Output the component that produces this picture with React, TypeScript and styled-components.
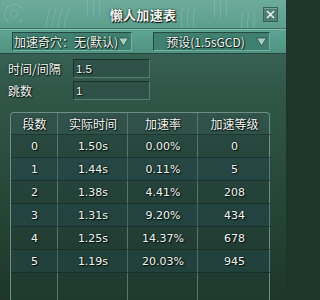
import React from "react";
import styled, { createGlobalStyle } from "styled-components";

const GlobalStyle = createGlobalStyle`
  html, body {
    margin: 0;
    padding: 0;
    background: #1d3629;
  }
  * { box-sizing: border-box; }
`;

const CJK = `"Noto Sans CJK SC", sans-serif`;
const NUM = `"DejaVu Sans", "Noto Sans CJK SC", sans-serif`;
const SHADOW = `0 0 2px #07140f, 1px 1px 1px #06110c`;

const Window = styled.div`
  width: 286px;
  height: 300px;
  display: flex;
  flex-direction: column;
  font-family: ${CJK};
  color: #f2f6f2;
  background: linear-gradient(180deg, #3f6e64 0%, #315749 30%, #254535 70%, #1d3629 100%);
  overflow: hidden;
`;

const ring = (x: number, y: number, r: number) =>
  `repeating-radial-gradient(circle at ${x}px ${y}px, transparent 0 3px, rgba(150, 210, 194, 0.28) 3px 4px, transparent 4px 6px) ${x - r}px ${y - r}px / ${r * 2}px ${r * 2}px no-repeat`;

const TitleBar = styled.div`
  height: 29px;
  display: grid;
  grid-template-columns: 1fr auto 1fr;
  align-items: center;
  padding: 0 8px;
  background:
    ${ring(12, 12, 10)},
    ${ring(58, 20, 12)},
    ${ring(92, 8, 9)},
    ${ring(188, 18, 11)},
    ${ring(222, 8, 10)},
    ${ring(250, 22, 9)},
    linear-gradient(180deg, #6dab9b 0%, #5f9f8e 100%);
  border-bottom: 1px solid #3f7466;
`;

const Title = styled.div`
  grid-column: 2;
  font-size: 13px;
  font-weight: bold;
  letter-spacing: 0.3px;
  text-shadow: ${SHADOW};
  padding-top: 1px;
`;

const CloseButton = styled.div`
  grid-column: 3;
  justify-self: end;
  width: 15px;
  height: 15px;
  display: flex;
  align-items: center;
  justify-content: center;
  background: #4f7f73;
  border: 1px solid #3a6358;
  box-shadow: inset 0 1px 0 rgba(255, 255, 255, 0.25);
`;

const SelectBar = styled.div`
  height: 25px;
  display: flex;
  align-items: center;
  gap: 21px;
  padding: 0 16px 0 12px;
  background: linear-gradient(180deg, #5ea493 0%, #4f9282 100%);
  border-top: 1px solid #7dbcab;
  border-bottom: 1px solid #27463d;
`;

const Select = styled.div<{ $center?: boolean }>`
  flex: 1;
  height: 19px;
  display: flex;
  align-items: center;
  padding: 0 2px 0 1px;
  background: #3f8070;
  border: 1px solid #244a40;
  border-right-color: #6fb0a0;
  border-bottom-color: #6fb0a0;
  font-size: 12px;
  text-shadow: ${SHADOW};
  white-space: nowrap;

  span {
    flex: 1;
    text-align: ${(p) => (p.$center ? "center" : "left")};
  }
`;

const Arrow = styled.svg`
  width: 11px;
  height: 10px;
  flex: none;
`;

const Form = styled.div`
  display: flex;
  flex-direction: column;
  gap: 3px;
  padding: 5px 0 0 8px;
`;

const FormRow = styled.div`
  display: flex;
  align-items: center;
`;

const Label = styled.div`
  width: 65px;
  font-size: 12px;
  text-shadow: ${SHADOW};
`;

const Input = styled.div`
  width: 77px;
  height: 19px;
  display: flex;
  align-items: center;
  padding: 0 2px;
  font-family: "Liberation Sans", sans-serif;
  font-size: 11.5px;
  background: #2e5148;
  border: 1px solid #1a3029;
  border-right-color: #557d72;
  border-bottom-color: #557d72;
  text-shadow: ${SHADOW};
`;

const Table = styled.div`
  margin: 12px 0 0 10px;
  width: 260px;
  flex: 1;
  display: grid;
  grid-template-columns: 47px 70px 70px 73px;
  grid-auto-rows: 23px;
  grid-template-rows: 22px;
  align-content: start;
  border: 1px solid #6d8f86;
  border-bottom: none;
  border-radius: 4px 4px 0 0;
  background:
    linear-gradient(90deg,
      transparent 46px, #56776e 46px, #56776e 47px,
      transparent 47px, transparent 116px, #56776e 116px, #56776e 117px,
      transparent 117px, transparent 186px, #56776e 186px, #56776e 187px,
      transparent 187px),
    linear-gradient(180deg, #2a4a42 0%, #233f36 60%, #1f3a2e 100%);
`;

const Cell = styled.div<{ $head?: boolean; $alt?: boolean }>`
  display: flex;
  align-items: center;
  justify-content: center;
  font-family: ${(p) => (p.$head ? CJK : NUM)};
  font-size: ${(p) => (p.$head ? "12px" : "11px")};
  text-shadow: ${SHADOW};
  background: ${(p) =>
    p.$head ? "rgba(80, 120, 110, 0.2)" : p.$alt ? "rgba(35, 75, 85, 0.3)" : "transparent"};
  border-bottom: 1px solid ${(p) => (p.$head ? "rgba(20, 40, 34, 0.6)" : "rgba(18, 34, 30, 0.5)")};
`;

const rows = [
  ["0", "1.50s", "0.00%", "0"],
  ["1", "1.44s", "0.11%", "5"],
  ["2", "1.38s", "4.41%", "208"],
  ["3", "1.31s", "9.20%", "434"],
  ["4", "1.25s", "14.37%", "678"],
  ["5", "1.19s", "20.03%", "945"],
];

const DownArrow = () => (
  <Arrow viewBox="0 0 11 10">
    <path d="M0.5 1 L10.5 1 L5.5 9 Z" fill="#a9cfc4" stroke="#284a41" strokeWidth="0.8" />
  </Arrow>
);

export default function App() {
  return (
    <Window>
      <GlobalStyle />
      <TitleBar>
        <Title>懒人加速表</Title>
        <CloseButton>
          <svg width="9" height="9" viewBox="0 0 9 9">
            <path d="M1 1 L8 8 M8 1 L1 8" stroke="#eef4f1" strokeWidth="1.5" />
          </svg>
        </CloseButton>
      </TitleBar>
      <SelectBar>
        <Select>
          <span>加速奇穴：无(默认)</span>
          <DownArrow />
        </Select>
        <Select $center>
          <span>预设(1.5sGCD)</span>
          <DownArrow />
        </Select>
      </SelectBar>
      <Form>
        <FormRow>
          <Label>时间/间隔</Label>
          <Input>1.5</Input>
        </FormRow>
        <FormRow>
          <Label>跳数</Label>
          <Input>1</Input>
        </FormRow>
      </Form>
      <Table>
        {["段数", "实际时间", "加速率", "加速等级"].map((h) => (
          <Cell key={h} $head>
            {h}
          </Cell>
        ))}
        {rows.map((r, i) =>
          r.map((v, j) => (
            <Cell key={`${i}-${j}`} $alt={i % 2 === 1}>
              {v}
            </Cell>
          ))
        )}
      </Table>
    </Window>
  );
}
